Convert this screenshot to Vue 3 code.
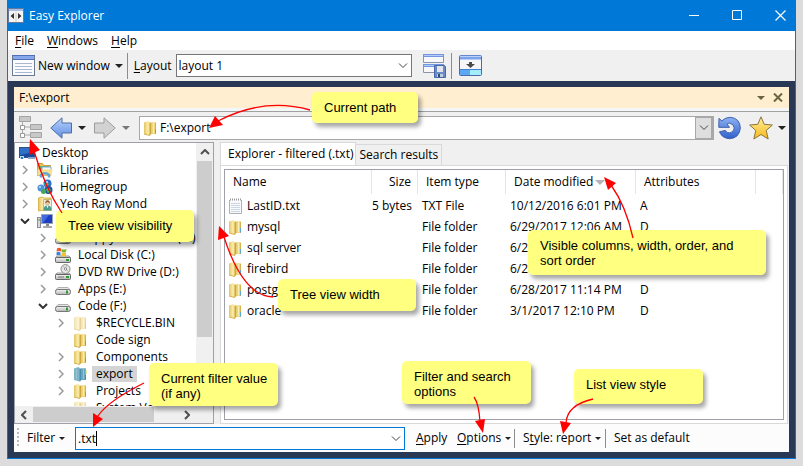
<script setup>
import { ref } from 'vue'

const layout = ref('layout 1')
const path = ref('F:\\export')
const filter = ref('.txt')

// level = indent depth, open: true / false / null (no expander)
const tree = [
  { name: 'Desktop', icon: 'desktop', level: 0, open: null },
  { name: 'Libraries', icon: 'library', level: 1, open: false },
  { name: 'Homegroup', icon: 'group', level: 1, open: false },
  { name: 'Yeoh Ray Mond', icon: 'user', level: 1, open: false },
  { name: 'This PC', icon: 'pc', level: 1, open: true },
  { name: 'Floppy Disk Drive (A:)', icon: 'drive', level: 2, open: false },
  { name: 'Local Disk (C:)', icon: 'windrive', level: 2, open: false },
  { name: 'DVD RW Drive (D:)', icon: 'dvd', level: 2, open: false },
  { name: 'Apps (E:)', icon: 'drive', level: 2, open: false },
  { name: 'Code (F:)', icon: 'drive', level: 2, open: true },
  { name: '$RECYCLE.BIN', icon: 'folder', level: 3, open: false, faded: true },
  { name: 'Code sign', icon: 'folder', level: 3, open: null },
  { name: 'Components', icon: 'folder', level: 3, open: false },
  { name: 'export', icon: 'folder-blue', level: 3, open: false, selected: true },
  { name: 'Projects', icon: 'folder', level: 3, open: false },
  { name: 'System Volume', icon: 'folder', level: 3, open: null, faded: true },
]

const files = [
  { name: 'LastID.txt', size: '5 bytes', type: 'TXT File', date: '10/12/2016 6:01 PM', attr: 'A' },
  { name: 'mysql', size: '', type: 'File folder', date: '6/29/2017 12:06 AM', attr: 'D' },
  { name: 'sql server', size: '', type: 'File folder', date: '6/28/2017 11:14 PM', attr: 'D' },
  { name: 'firebird', size: '', type: 'File folder', date: '6/28/2017 11:14 PM', attr: 'D' },
  { name: 'postgresql', size: '', type: 'File folder', date: '6/28/2017 11:14 PM', attr: 'D' },
  { name: 'oracle', size: '', type: 'File folder', date: '3/1/2017 12:10 PM', attr: 'D' },
]
</script>

<template>
  <div class="page">
    <!-- shared gradients and symbols -->
    <svg class="defs" width="0" height="0" aria-hidden="true">
      <defs>
        <linearGradient id="gold" x1="0" x2="1" y1="0" y2="0">
          <stop offset="0" stop-color="#e2c562" />
          <stop offset="0.3" stop-color="#f9e9a4" />
          <stop offset="1" stop-color="#e9cc6a" />
        </linearGradient>
        <linearGradient id="blue" x1="0" x2="0" y1="0" y2="1">
          <stop offset="0" stop-color="#b9d2f8" />
          <stop offset="1" stop-color="#5f8ee6" />
        </linearGradient>
        <linearGradient id="swirl" x1="0" x2="0" y1="0" y2="1">
          <stop offset="0" stop-color="#8fb2f2" />
          <stop offset="1" stop-color="#2f60cc" />
        </linearGradient>
        <linearGradient id="star" x1="0" x2="0" y1="0" y2="1">
          <stop offset="0" stop-color="#fff0a0" />
          <stop offset="1" stop-color="#f8b818" />
        </linearGradient>
        <linearGradient id="silver" x1="0" x2="0" y1="0" y2="1">
          <stop offset="0" stop-color="#f4f4f4" />
          <stop offset="1" stop-color="#b4b4b4" />
        </linearGradient>
      </defs>
      <symbol id="folder" viewBox="0 0 16 16">
        <path d="M1 2.500 5.500 1 7 2.500h6V14H8l-1 1.500L1 14z" fill="url(#gold)" />
        <path d="M6.500 3v12.500l2-1.500V2.500z" fill="#cfa740" />
        <path d="M8.500 2.500H13V14H8.500z" fill="#efd67c" />
        <path d="M10.500 3v10" stroke="#f9edb8" />
        <path d="M1 14l6 1.500M12.500 3v11" fill="none" stroke="#d4b250" />
        <path d="M12.500 9v4.500" stroke="#58a8dc" />
      </symbol>
      <symbol id="folder-blue" viewBox="0 0 16 16">
        <path d="M1 2.500 5.500 1 7 2.500h6V14H8l-1 1.500L1 14z" fill="#7fb4c8" />
        <path d="M6.500 3v12.500l2-1.500V2.500z" fill="#4f8fae" />
        <path d="M8.500 2.500H13V14H8.500z" fill="#69a8c2" />
        <path d="M3.500 3v10M10.500 3v10" stroke="#96c4d2" />
        <path d="M13 4v4" stroke="#c8dc3c" />
        <path d="M12.500 9v4.500" stroke="#2c8cd4" />
      </symbol>
      <symbol id="drive" viewBox="0 0 16 16">
        <path d="M3 6.500h10l2.500 3H.5z" fill="#e6e6e6" stroke="#b0b0b0" />
        <rect x="0.500" y="8.500" width="15" height="5" rx="2" fill="url(#silver)" stroke="#777" />
        <path d="M11 11h2" stroke="#2f9a2f" stroke-width="3" />
      </symbol>
      <symbol id="windrive" viewBox="0 0 16 16">
        <path d="M2 9h12l2 2H0z" fill="#ddd" stroke="#999" />
        <rect x="0.500" y="10.500" width="15" height="5" rx="1" fill="url(#silver)" stroke="#666" />
        <path d="M11 13h3" stroke="#2f9a2f" stroke-width="2" />
        <path d="M2 1.500q2-1.500 4 0v3q-2-1-4.500 0z" fill="#ec5b2a" />
        <path d="M6.500 2q2 1 5 0L11 5q-2 1-4.500 0z" fill="#7fb72c" />
        <path d="M1.500 5.500q2-1.500 4 0v3q-2-1-4 0z" fill="#3b82d8" />
        <path d="M6.500 5.500q2 1 4.500 0v3.500q-2 1-4.500 0z" fill="#f8c02c" />
      </symbol>
      <symbol id="dvd" viewBox="0 0 16 16">
        <path d="M2 9h12l2 2H0z" fill="#ddd" stroke="#999" />
        <circle cx="10.500" cy="5" r="4.500" fill="#e8e8e8" stroke="#8c8c8c" />
        <path d="M10.500 5 7.500 2M10.500 5l1-4M10.500 5l3 2.500" stroke="#a8b8a8" />
        <circle cx="10.500" cy="5" r="1.200" fill="#fff" stroke="#888" />
        <rect x="0.500" y="10.500" width="15" height="5" rx="1" fill="url(#silver)" stroke="#666" />
        <path d="M3 13h6" stroke="#777" />
        <path d="M11 13h3" stroke="#2f9a2f" stroke-width="2" />
      </symbol>
      <symbol id="desktop" viewBox="0 0 16 16">
        <rect x="0.500" y="2.500" width="15" height="10" fill="#174a9c" stroke="#34507c" />
        <path d="M1 3h14v4L1 10z" fill="#2e6fc8" />
        <path d="M9 12h7v2H9z" fill="#8ba6c8" />
        <path d="M1 11h4v3H1z" fill="#b8dcf4" />
        <path d="M2 12h2v2H2z" fill="#2d76c8" />
      </symbol>
      <symbol id="library" viewBox="0 0 16 16">
        <path d="M.5 1.500h5l1 2h7v10H.5z" fill="#e9c65c" stroke="#c9a03c" />
        <path d="M3 4h9v4H3z" fill="#58b468" />
        <path d="M5 5h9v4H5z" fill="#f4f8fc" stroke="#87a8cc" />
        <path d="M.5 7.500h15l-1 6H.5z" fill="#f5e08f" />
        <path d="M4 15.500V13q4-3.500 8 0v2.500" fill="none" stroke="#5fa8dc" stroke-width="2.500" />
      </symbol>
      <symbol id="group" viewBox="0 0 16 16">
        <circle cx="10.500" cy="4.500" r="4" fill="#2f70c8" />
        <circle cx="4" cy="9" r="3.500" fill="#4c90e0" />
        <circle cx="11.500" cy="11" r="4" fill="#1e55ac" />
        <circle cx="6.500" cy="12.500" r="2.500" fill="#46a84c" />
        <path d="M7 5q2-3 5 0l-2 3zM9 10q3-2 5 1l-3 3z" fill="#58b84c" />
        <circle cx="10" cy="3" r="1" fill="#c8e4ff" />
        <circle cx="3" cy="8" r="1" fill="#c8e4ff" />
      </symbol>
      <symbol id="user" viewBox="0 0 16 16">
        <path d="M1.500 2 5 1l2 1h7v12H7l-5.500 1z" fill="url(#gold)" stroke="#d8b654" />
        <path d="M6.500 3.500h8v11h-8z" fill="#f2f0dc" stroke="#c8b878" />
        <circle cx="10.500" cy="6.500" r="2.200" fill="#8b5e3c" />
        <circle cx="10.500" cy="7.500" r="1.600" fill="#f0c8a0" />
        <path d="M6.500 14.500q0-5 4-5t4 5z" fill="#4b9c8c" />
        <path d="M9.500 9.800h2l-1 2.500z" fill="#fff" />
      </symbol>
      <symbol id="pc" viewBox="0 0 16 16">
        <rect x="0.500" y="4.500" width="3" height="10" fill="#d8d8e0" stroke="#8c8c98" />
        <path d="M1 7h2" stroke="#38a838" />
        <rect x="4.500" y="1.500" width="11" height="9" fill="#1c3fc0" stroke="#9aa4b4" />
        <path d="M5 2h7L6 10H5z" fill="#4468e0" />
        <path d="M9 11h3v2H9z" fill="#888" />
        <path d="M6 14h9" stroke="#aaa" stroke-width="2" />
      </symbol>
      <symbol id="textfile" viewBox="0 0 16 16">
        <path d="M1.500 2v13.500h12V2" fill="#f8fafc" stroke="#b0b0b0" />
        <path d="M2 1.500h12" stroke="#999" stroke-width="2" stroke-dasharray="1 1" />
        <path d="M3 5.500h9M3 7.500h9M3 9.500h9M3 11.500h9M3 13.500h9" stroke="#ccd6e4" />
      </symbol>
    </svg>

    <div class="window">
      <header class="titlebar">
        <svg class="app-icon" width="16" height="16" viewBox="0 0 16 16">
          <rect x="0.500" y="0.500" width="15" height="14" fill="#f4f4f4" stroke="#66799c" />
          <path d="M1 2h14" stroke="#a8bfe8" stroke-width="2" />
          <path d="M6 5v6L2.500 8zM10 5v6l3.500-3z" fill="#333" />
          <path d="M8 4v10" stroke="#ccc" />
        </svg>
        <span class="title">Easy Explorer</span>
        <div class="win-buttons">
          <button type="button" aria-label="Minimize">
            <svg width="11" height="11"><path d="M0 5.500h10" stroke="#fff" /></svg>
          </button>
          <button type="button" aria-label="Maximize">
            <svg width="11" height="11"><path d="M.5.5h9v9h-9z" fill="none" stroke="#fff" /></svg>
          </button>
          <button type="button" aria-label="Close">
            <svg width="11" height="11"><path d="m.5.5 10 10m0-10-10 10" stroke="#fff" stroke-width="1.200" /></svg>
          </button>
        </div>
      </header>

      <nav class="menu">
        <button type="button"><u>F</u>ile</button>
        <button type="button"><u>W</u>indows</button>
        <button type="button"><u>H</u>elp</button>
      </nav>

      <div class="toolbar">
        <button type="button" class="new-window">
          <svg width="23" height="21" viewBox="0 0 23 21">
            <rect x="0.500" y="0.500" width="22" height="20" fill="#fbfbfd" stroke="#6a7a94" />
            <path d="M1 2.500h21" stroke="#86a8ea" stroke-width="3" />
            <path d="M0 .5h23M1 4.500h21" stroke="#4f70b8" />
            <path d="M3 8.500h17M3 11.500h17M3 14.500h17M3 17.500h17" stroke="#a9b8d0" />
          </svg>
          <span>New window</span>
          <i class="caret"></i>
        </button>
        <span class="sep"></span>
        <label for="layout"><u>L</u>ayout</label>
        <div class="combo layout-combo">
          <select id="layout" v-model="layout">
            <option>layout 1</option>
          </select>
          <svg class="chev" width="10" height="6"><path d="m1 .5 4 4 4-4" /></svg>
        </div>
        <button type="button" class="save-layout" aria-label="Save layout">
          <svg width="24" height="24" viewBox="0 0 24 24">
            <path d="M.5.500h20v8H.5zM.5 10.500h20v8H.5z" fill="#f8f8fa" stroke="#8a94a6" />
            <path d="M0 1.500h21M0 11.500h21" stroke="#7096e2" stroke-width="3" />
            <path d="M1 1.500h19M1 11.500h19" stroke="#b4ccf8" />
            <path d="M11.500 11.500h10l1 1v11h-11z" fill="#6c8cc8" stroke="#4a68a6" />
            <path d="M14 12h6v6h-6z" fill="#e4e4ea" />
            <path d="M14 20h6v3h-6z" fill="#c0ccdf" />
            <path d="M15 20h2v3h-2z" fill="#334b78" />
          </svg>
        </button>
        <span class="sep"></span>
        <button type="button" aria-label="Load layout">
          <svg width="23" height="21" viewBox="0 0 23 21">
            <rect x="0.500" y="0.500" width="22" height="20" rx="1" fill="#f6f6f8" stroke="#4a6cac" />
            <path d="M1 2.500h21" stroke="#7ea2ec" stroke-width="4" />
            <path d="M1 1.500h21" stroke="#b8d0fa" />
            <path d="M1 17h21" stroke="#a2ecfc" stroke-width="6" />
            <path d="M1 17h10" stroke="#5ca8f4" stroke-width="6" />
            <path d="M1 14.500h21" stroke="#3c80d8" />
            <path d="M10 7h3v2h3l-4.500 4L7 9h3z" fill="#4a4a4a" />
          </svg>
        </button>
      </div>

      <main class="frame">
        <div class="doc-title">
          <span>F:\export</span>
          <button type="button" aria-label="Window list"><i class="caret olive"></i></button>
          <button type="button" aria-label="Close document">
            <svg width="10" height="9"><path d="m1 .5 8 8m0-8-8 8" stroke="#6b653f" stroke-width="2" /></svg>
          </button>
        </div>

        <div class="nav">
          <button type="button" aria-label="Toggle tree view">
            <svg width="23" height="23" viewBox="0 0 23 23">
              <path d="M3.500 6v13H12M4 11h8" fill="none" stroke="#aaa" />
              <path d="M.5.500h11v5H.5zM11.500 8.500h11v5h-11zM11.500 16.500h11v5h-11z" fill="#c8c8c8" stroke="#a4a4a4" />
              <path d="M1.500 9.500h4v4h-4zM1.500 17.500h4v4h-4z" fill="#fff" stroke="#999" />
            </svg>
          </button>
          <button type="button" class="arrow-btn" aria-label="Back">
            <svg width="22" height="22" viewBox="0 0 22 22">
              <path d="M.8 11 12 .8V6h9.500v10H12v5.200z" fill="url(#blue)" stroke="#4d6ea8" />
            </svg>
            <i class="caret"></i>
          </button>
          <button type="button" class="arrow-btn" aria-label="Forward">
            <svg width="22" height="22" viewBox="0 0 22 22">
              <path d="M21.200 11 10 .8V6H.5v10H10v5.200z" fill="#d2d2d2" stroke="#9c9c9c" />
            </svg>
            <i class="caret dim"></i>
          </button>
          <div class="path-combo">
            <svg width="14" height="16"><use href="#folder" width="16" height="16" /></svg>
            <input v-model="path" type="text" aria-label="Path" />
            <button type="button" aria-label="Recent paths">
              <svg class="chev" width="10" height="6"><path d="m1 .5 4 4 4-4" /></svg>
            </button>
          </div>
          <button type="button" class="refresh" aria-label="Refresh">
            <svg width="23" height="24" viewBox="0 0 24 24">
              <path
                d="M1 2 4 4.500Q8 .8 13 .8 23 2 23.300 12 22.500 22.500 12 23.200 4 22.500 1.500 16l6-1.500q2 3 5 2.700 4-.8 4.500-5.200-.8-4.500-5-5-1.500 0-2.500 1L12 11.300H.8z"
                fill="url(#swirl)" stroke="#3a5ca8"
              />
            </svg>
          </button>
          <button type="button" class="arrow-btn favorites" aria-label="Favorites">
            <svg width="24" height="24" viewBox="0 0 24 24">
              <path
                d="m12 .8 3.200 7.500 8.200.7-6.200 5.500 2 8.500L12 18.500 4.800 23l2-8.500L.6 9l8.200-.7z"
                fill="url(#star)" stroke="#8c7440" stroke-linejoin="round"
              />
            </svg>
            <i class="caret"></i>
          </button>
        </div>

        <div class="content">
          <section class="tree-box">
            <div class="tree-main">
              <ul class="tree">
                <li v-for="node in tree" :key="node.name" :class="['level-' + node.level, { faded: node.faded, selected: node.selected }]">
                  <span v-if="node.level" class="expander">
                    <svg v-if="node.open === false" width="6" height="10"><path d="m1 1 4 4-4 4" class="closed" /></svg>
                    <svg v-if="node.open" width="10" height="6"><path d="m1 1 4 4 4-4" class="opened" /></svg>
                  </span>
                  <svg class="node-icon" width="16" height="16"><use :href="'#' + node.icon" width="16" height="16" /></svg>
                  <span class="node-name">{{ node.name }}</span>
                </li>
              </ul>
              <div class="vscroll">
                <svg width="10" height="6"><path d="m1 5 4-4 4 4" /></svg>
                <div class="thumb"></div>
              </div>
            </div>
            <div class="hscroll">
              <svg width="6" height="10"><path d="M5 1 1 5l4 4" /></svg>
              <div class="thumb"></div>
              <svg width="6" height="10"><path d="m1 1 4 4-4 4" /></svg>
            </div>
          </section>

          <section class="list-side">
            <div class="tabs">
              <button type="button" class="tab active">Explorer - filtered (.txt)</button>
              <button type="button" class="tab">Search results</button>
            </div>
            <div class="tab-page">
              <div class="list-box">
                <table>
                  <colgroup>
                    <col class="c-name" />
                    <col class="c-size" />
                    <col class="c-type" />
                    <col class="c-date" />
                    <col class="c-attr" />
                    <col />
                  </colgroup>
                  <thead>
                    <tr>
                      <th>Name</th>
                      <th class="right">Size</th>
                      <th>Item type</th>
                      <th>Date modified<i class="sort"></i></th>
                      <th>Attributes</th>
                      <th></th>
                    </tr>
                  </thead>
                  <tbody>
                    <tr v-for="file in files" :key="file.name">
                      <td class="name">
                        <svg width="16" height="16"><use :href="file.size ? '#textfile' : '#folder'" width="16" height="16" /></svg>
                        <span>{{ file.name }}</span>
                      </td>
                      <td class="right">{{ file.size }}</td>
                      <td>{{ file.type }}</td>
                      <td>{{ file.date }}</td>
                      <td>{{ file.attr }}</td>
                      <td></td>
                    </tr>
                  </tbody>
                </table>
              </div>
            </div>
          </section>
        </div>

        <footer class="filter-bar">
          <span class="grip"></span>
          <button type="button" class="filter-menu"><label for="filter">Filter</label><i class="caret small"></i></button>
          <div class="combo filter-combo">
            <input id="filter" v-model="filter" type="text" />
            <span class="cursor"></span>
            <svg class="chev" width="10" height="6"><path d="m1 .5 4 4 4-4" /></svg>
          </div>
          <button type="button" class="apply"><u>A</u>pply</button>
          <button type="button" class="options"><u>O</u>ptions<i class="caret small"></i></button>
          <span class="sep"></span>
          <button type="button" class="style">S<u>t</u>yle: report<i class="caret small"></i></button>
          <span class="sep"></span>
          <button type="button" class="default">Set as default</button>
        </footer>
      </main>
    </div>

    <!-- help notes over the window -->
    <div class="note note-path">Current path</div>
    <div class="note note-tree">Tree view visibility</div>
    <div class="note note-width">Tree view width</div>
    <div class="note note-columns">Visible columns, width, order, and<br />sort order</div>
    <div class="note note-filter">Current filter value<br />(if any)</div>
    <div class="note note-options">Filter and search<br />options</div>
    <div class="note note-style">List view style</div>

    <svg class="arrows" width="803" height="466" aria-hidden="true">
      <g class="lines">
        <path d="M310 110Q264 97 218 121" />
        <path d="M62 213Q45 188 34 151" />
        <path d="M273 297Q243 296 224 237" />
        <path d="M633 238Q626 206 611 185" />
        <path d="M144 383Q108 401 98 416" />
        <path d="M474 397Q479 404 480 422" />
        <path d="M593 399Q567 405 566 423" />
      </g>
      <g class="heads">
        <path d="m209 128 6-12 8 9z" />
        <path d="m30 139 10 11-11 5z" />
        <path d="m219 226 10 10-11 4z" />
        <path d="m604 177 12 6-8 7z" />
        <path d="m93 427 0-14 10 6z" />
        <path d="m483 433-8-12 10-2z" />
        <path d="m563 434-3-13 11 2z" />
      </g>
    </svg>
  </div>
</template>

<style>
body {
  margin: 0;
}

#app {
  height: 100vh;
}
</style>

<style scoped>
* {
  box-sizing: border-box;
}

.page {
  position: relative;
  height: 100%;
  padding: 0 7px 7px;
  background: #dcdcdc;
  overflow: hidden;
  font-family: "Open Sans", "Noto Sans", sans-serif;
  font-size: 12px;
  line-height: 16px;
  color: #000;
}

.defs {
  position: absolute;
}

button,
input,
select {
  padding: 0;
  border: 0;
  background: none;
  font: inherit;
  color: inherit;
  outline: none;
}

button {
  display: flex;
  align-items: center;
  white-space: nowrap;
}

svg {
  display: block;
  flex-shrink: 0;
}

u {
  text-underline-offset: 2px;
}

.window {
  display: flex;
  flex-direction: column;
  height: 100%;
  border: 1px solid #0078d7;
  border-top: 0;
  background: #f0f0f0;
}

.titlebar {
  display: flex;
  align-items: center;
  height: 31px;
  background: #0078d7;
  color: #fff;
}

.title {
  flex: 1;
  margin-left: 5px;
}

.win-buttons {
  display: flex;
  gap: 13px;
}

.win-buttons button {
  justify-content: center;
  width: 30px;
  height: 30px;
}

.menu {
  display: flex;
  gap: 13px;
  height: 19px;
  padding-left: 7px;
  background: #fff;
}

.toolbar {
  display: flex;
  align-items: center;
  height: 31px;
  padding-left: 4px;
}

.new-window {
  gap: 3px;
}

.caret {
  flex-shrink: 0;
  margin-left: 2px;
  border: 4px solid transparent;
  border-top-color: #222;
  border-bottom: 0;
}

.caret.small {
  border-width: 3px;
  border-bottom: 0;
}

.caret.dim {
  border-top-color: #777;
}

.caret.olive {
  margin: 0;
  border-top-color: #6b653f;
}

.sep {
  width: 1px;
  height: 26px;
  background: #8c8c8c;
}

.toolbar .sep {
  margin: 0 7px 0 4px;
}

.combo {
  position: relative;
  border: 1px solid #777;
  background: #fff;
}

.combo select,
.combo input {
  appearance: none;
  width: 100%;
  height: 100%;
  padding: 0 2px;
}

.layout-combo {
  width: 236px;
  height: 23px;
  margin: 0 11px 0 4px;
}

.new-window + .sep {
  margin-right: 6px;
}

.chev {
  fill: none;
  stroke: #444;
}

.combo .chev {
  position: absolute;
  top: 8px;
  right: 3px;
}

.frame {
  display: flex;
  flex: 1;
  flex-direction: column;
  min-height: 0;
  padding: 6px;
  background: #293955;
}

.doc-title {
  display: flex;
  align-items: center;
  gap: 8px;
  height: 21px;
  padding: 0 6px 0 5px;
  background: #ffeecf;
}

.doc-title span {
  flex: 1;
}

.nav {
  display: flex;
  align-items: center;
  height: 34px;
  padding: 2px 3px 0 5px;
  border-top: 3px solid #f4f6f8;
  background: #f0f0f0;
  box-shadow: inset 0 1px 0 #a0a0a0;
}

.arrow-btn {
  gap: 4px;
  margin-left: 8px;
}

.path-combo {
  display: flex;
  flex: 1;
  align-items: center;
  height: 24px;
  margin-left: 9px;
  padding-left: 3px;
  border: 1px solid #a8a8a8;
  background: #fff;
}

.path-combo input {
  flex: 1;
  min-width: 0;
  padding-left: 3px;
}

.path-combo button {
  justify-content: center;
  width: 18px;
  height: 22px;
  border: 1px solid #a8a8a8;
  border-right-width: 2px;
  background: #dedede;
}

.refresh {
  margin-left: 4px;
}

.favorites {
  gap: 3px;
}

.content {
  display: flex;
  flex: 1;
  gap: 6px;
  min-height: 0;
  background: #f0f0f0;
}

.tree-box {
  display: flex;
  flex-direction: column;
  flex-shrink: 0;
  width: 200px;
  border: 1px solid #a0a0a8;
  background: #fff;
}

.tree-main {
  display: flex;
  flex: 1;
  min-height: 0;
}

.tree {
  flex: 1;
  min-width: 0;
  margin: 0;
  padding: 1px 0 0;
  overflow: hidden;
  list-style: none;
}

.tree li {
  display: flex;
  align-items: center;
  height: 17px;
  padding-left: 4px;
  white-space: nowrap;
}

.tree .level-2 {
  padding-left: 22px;
}

.tree .level-3 {
  padding-left: 40px;
}

.expander {
  display: flex;
  flex-shrink: 0;
  justify-content: center;
  width: 12px;
  margin-right: 6px;
}

.closed {
  fill: none;
  stroke: #999;
  stroke-width: 1.5;
}

.opened {
  fill: none;
  stroke: #333;
  stroke-width: 2;
}

.node-name {
  margin-left: 3px;
  padding: 0 4px;
}

.faded .node-icon {
  opacity: 0.5;
}

.selected .node-name {
  background: #d4d4d4;
}

.vscroll {
  display: flex;
  flex-direction: column;
  align-items: center;
  width: 17px;
  background: #f0f0f0;
}

.vscroll svg,
.hscroll svg {
  fill: none;
  stroke: #505050;
  stroke-width: 2;
}

.vscroll svg {
  margin: 6px 0;
}

.thumb {
  background: #cdcdcd;
}

.vscroll .thumb {
  width: 15px;
  height: 176px;
}

.hscroll {
  display: flex;
  align-items: center;
  height: 17px;
  padding-left: 6px;
  background: #f0f0f0;
}

.hscroll .thumb {
  width: 121px;
  height: 15px;
  margin: 0 30px 0 6px;
}

.list-side {
  display: flex;
  flex: 1;
  flex-direction: column;
  min-width: 0;
  padding-right: 1px;
}

.tabs {
  display: flex;
  align-items: flex-end;
  height: 23px;
}

.tab {
  height: 21px;
  padding: 0 3px;
  border: 1px solid #d9d9d9;
  border-left: 0;
  border-bottom: 0;
}

.tab.active {
  height: 23px;
  padding: 0 2px 0 7px;
  border-left: 1px solid #d9d9d9;
  background: #fff;
}

.tab-page {
  flex: 1;
  min-height: 0;
  padding: 3px;
  border: 1px solid #d9d9d9;
  background: #fff;
}

.list-box {
  height: 100%;
  border: 1px solid #a0a0a8;
  overflow: hidden;
}

table {
  width: 100%;
  border-collapse: separate;
  border-spacing: 0;
  table-layout: fixed;
}

.c-name {
  width: 147px;
}

.c-size {
  width: 46px;
}

.c-type {
  width: 88px;
}

.c-date {
  width: 130px;
}

.c-attr {
  width: 120px;
}

th {
  height: 25px;
  padding: 0 7px 1px 8px;
  background: linear-gradient(#e5e5e5, #e5e5e5) right top / 1px 24px no-repeat;
  font-weight: 400;
  text-align: left;
  white-space: nowrap;
}

td {
  height: 21px;
  padding: 0 0 0 4px;
  white-space: nowrap;
}

th.right {
  padding-left: 0;
  text-align: right;
}

td.right {
  padding: 0 7px 0 0;
  text-align: right;
}

td.name {
  display: flex;
  align-items: center;
  gap: 3px;
  padding-left: 3px;
}

.sort {
  display: inline-block;
  margin-left: 2px;
  border: 5px solid transparent;
  border-top-color: #b4b4b4;
  border-bottom: 0;
  vertical-align: middle;
}

.filter-bar {
  display: flex;
  align-items: center;
  flex-shrink: 0;
  height: 28px;
  background: #fcfcfc;
}

.grip {
  width: 2px;
  height: 20px;
  margin: 0 8px 0 3px;
  background: repeating-linear-gradient(#bbb 0 2px, transparent 2px 4px);
}

.filter-menu {
  width: 48px;
}

.filter-bar .caret {
  margin-left: 4px;
}

.filter-combo {
  display: flex;
  align-items: center;
  width: 330px;
  height: 23px;
  border-color: #0078d7;
}

.filter-combo input {
  width: 20px;
  padding: 0 0 0 2px;
}

.cursor {
  width: 1px;
  height: 15px;
  background: #000;
}

.apply {
  width: 41px;
  margin-left: 11px;
}

.options {
  width: 57px;
}

.filter-bar .sep {
  height: 19px;
}

.style {
  width: 90px;
  padding-left: 8px;
}

.default {
  padding-left: 8px;
}

.note {
  position: absolute;
  padding: 8px 12px;
  border-radius: 5px;
  background: #ffff80;
  box-shadow: 3px 4px 4px rgba(0, 0, 0, 0.35);
  font-family: "Liberation Sans", Arial, sans-serif;
  font-size: 13px;
  line-height: 15px;
  white-space: nowrap;
}

.note-path {
  top: 92px;
  left: 312px;
  width: 106px;
}

.note-tree {
  top: 210px;
  left: 56px;
  width: 138px;
  height: 32px;
}

.note-width {
  top: 279px;
  left: 278px;
  width: 138px;
  height: 32px;
}

.note-columns {
  top: 230px;
  left: 528px;
  width: 238px;
  height: 45px;
}

.note-filter {
  top: 363px;
  left: 149px;
  width: 129px;
  height: 43px;
}

.note-options {
  top: 361px;
  left: 402px;
  width: 129px;
  height: 43px;
}

.note-style {
  top: 369px;
  left: 574px;
  width: 129px;
  height: 35px;
}

.arrows {
  position: absolute;
  top: 0;
  left: 0;
  pointer-events: none;
}

.lines {
  fill: none;
  stroke: #f00;
  stroke-width: 1.3;
}

.heads {
  fill: #f00;
}
</style>
